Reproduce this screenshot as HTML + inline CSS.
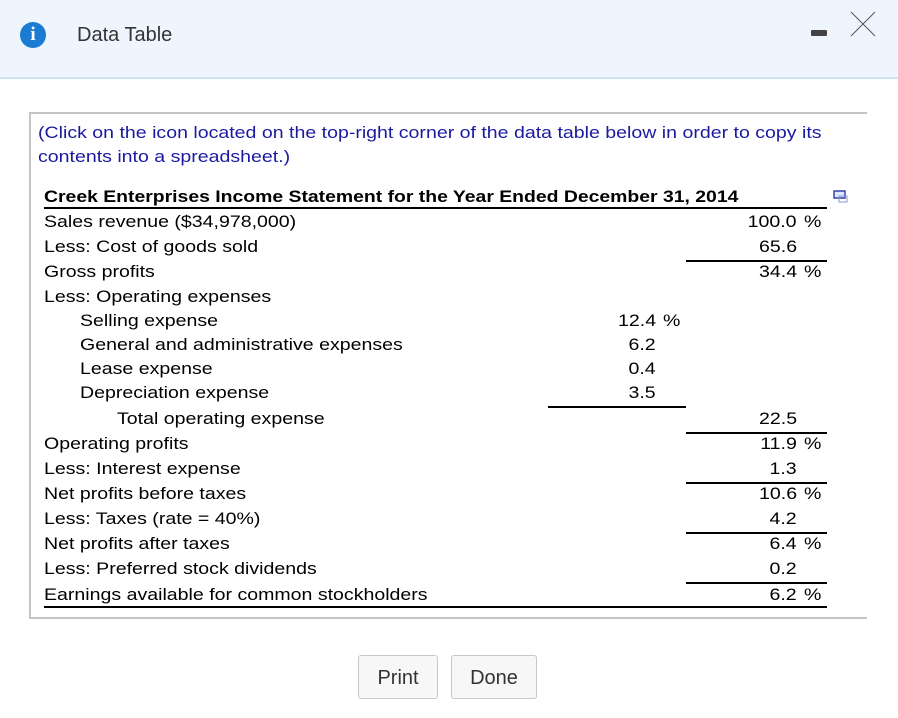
<!DOCTYPE html>
<html><head><style>
body{margin:0;width:898px;height:718px;background:#fff;font-family:"Liberation Sans",Arial,sans-serif;position:relative;overflow:hidden}
.hdr{position:absolute;left:0;top:0;width:898px;height:77px;background:#eef5fc;border-bottom:2px solid #cfe3f5}
.t{position:absolute;font-size:17px;color:#000;white-space:nowrap;line-height:20px;transform:scaleX(1.15);transform-origin:left top}
.r{position:absolute;font-size:17px;white-space:nowrap;line-height:20px;text-align:right;transform:scaleX(1.15);transform-origin:right top}
.ln{position:absolute;height:2px;background:#000}
.btn{position:absolute;top:655px;height:44px;border:1px solid #c8c8c8;border-radius:3px;background:#f7f7f7;font-size:20px;color:#333;text-align:center;line-height:44px;box-sizing:border-box}
</style></head><body>
<div class="hdr"></div>
<div style="position:absolute;left:20px;top:22px;width:26px;height:26px;border-radius:50%;background:#1a7bd2;color:#fff;font:bold 19px 'Liberation Serif',serif;text-align:center;line-height:26px">i</div>
<div style="position:absolute;left:77px;top:24px;font-size:20px;color:#333;line-height:22px">Data Table</div>
<div style="position:absolute;left:811px;top:30px;width:16px;height:6px;background:#444;border-radius:1px"></div>
<svg style="position:absolute;left:850px;top:11px" width="26" height="26"><path d="M1 1L25 25M25 1L1 25" stroke="#555" stroke-width="1"/></svg>
<div style="position:absolute;left:29px;top:112px;width:838px;height:507px;border:2px solid #c4c4c4;border-right:none;box-sizing:border-box"></div>
<div class="t" style="left:38px;top:121px;color:#1a1aa0;line-height:24px">(Click on the icon located on the top-right corner of the data table below in order to copy its<br>contents into a spreadsheet.)</div>
<div class="t" style="left:44px;top:187px;font-weight:bold;transform:scaleX(1.14)">Creek Enterprises Income Statement for the Year Ended December 31, 2014</div>
<svg style="position:absolute;left:833px;top:190px" width="16" height="14"><rect x="1" y="1" width="11" height="7" fill="#dde6ff" stroke="#3344aa" stroke-width="1.5"/><rect x="6" y="6" width="8" height="6" fill="none" stroke="#8899cc" stroke-width="1"/></svg>
<div class="ln" style="left:44px;top:207px;width:783px"></div>

<div class="t" style="left:44px;top:212px">Sales revenue ($34,978,000)</div>
<div class="t" style="left:44px;top:237px">Less: Cost of goods sold</div>
<div class="t" style="left:44px;top:262px">Gross profits</div>
<div class="t" style="left:44px;top:287px">Less: Operating expenses</div>
<div class="t" style="left:80px;top:311px">Selling expense</div>
<div class="t" style="left:80px;top:335px">General and administrative expenses</div>
<div class="t" style="left:80px;top:359px">Lease expense</div>
<div class="t" style="left:80px;top:383px">Depreciation expense</div>
<div class="t" style="left:117px;top:409px">Total operating expense</div>
<div class="t" style="left:44px;top:434px">Operating profits</div>
<div class="t" style="left:44px;top:459px">Less: Interest expense</div>
<div class="t" style="left:44px;top:484px">Net profits before taxes</div>
<div class="t" style="left:44px;top:509px">Less: Taxes (rate = 40%)</div>
<div class="t" style="left:44px;top:534px">Net profits after taxes</div>
<div class="t" style="left:44px;top:559px">Less: Preferred stock dividends</div>
<div class="t" style="left:44px;top:585px">Earnings available for common stockholders</div>

<div class="r" style="right:101px;top:212px">100.0</div><div class="t" style="left:804px;top:212px">%</div>
<div class="r" style="right:101px;top:237px">65.6</div>
<div class="ln" style="left:686px;top:260px;width:141px"></div>
<div class="r" style="right:101px;top:262px">34.4</div><div class="t" style="left:804px;top:262px">%</div>

<div class="r" style="right:242px;top:311px">12.4</div><div class="t" style="left:663px;top:311px">%</div>
<div class="r" style="right:242px;top:335px">6.2</div>
<div class="r" style="right:242px;top:359px">0.4</div>
<div class="r" style="right:242px;top:383px">3.5</div>
<div class="ln" style="left:548px;top:406px;width:138px"></div>

<div class="r" style="right:101px;top:409px">22.5</div>
<div class="ln" style="left:686px;top:432px;width:141px"></div>
<div class="r" style="right:101px;top:434px">11.9</div><div class="t" style="left:804px;top:434px">%</div>
<div class="r" style="right:101px;top:459px">1.3</div>
<div class="ln" style="left:686px;top:482px;width:141px"></div>
<div class="r" style="right:101px;top:484px">10.6</div><div class="t" style="left:804px;top:484px">%</div>
<div class="r" style="right:101px;top:509px">4.2</div>
<div class="ln" style="left:686px;top:532px;width:141px"></div>
<div class="r" style="right:101px;top:534px">6.4</div><div class="t" style="left:804px;top:534px">%</div>
<div class="r" style="right:101px;top:559px">0.2</div>
<div class="ln" style="left:686px;top:582px;width:141px"></div>
<div class="r" style="right:101px;top:585px">6.2</div><div class="t" style="left:804px;top:585px">%</div>
<div class="ln" style="left:44px;top:606px;width:783px"></div>

<div class="btn" style="left:358px;width:80px">Print</div>
<div class="btn" style="left:451px;width:86px">Done</div>
</body></html>
